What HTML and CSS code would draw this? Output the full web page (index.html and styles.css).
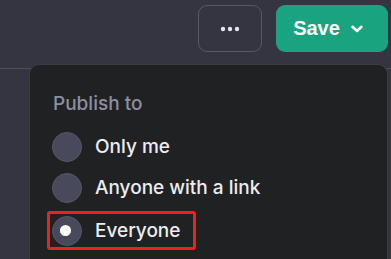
FILE: index.html
```html
<!DOCTYPE html>
<html>
<head>
<meta charset="utf-8">
<link rel="stylesheet" href="styles.css">
</head>
<body>
<div class="page">
  <header class="topbar">
    <button class="more-btn" aria-label="More">
      <svg width="20" height="6" viewBox="0 0 20 6"><circle cx="3" cy="3" r="2.2" fill="#e6e6ea"/><circle cx="10" cy="3" r="2.2" fill="#e6e6ea"/><circle cx="17" cy="3" r="2.2" fill="#e6e6ea"/></svg>
    </button>
    <button class="save-btn">
      <span>Save</span>
      <svg width="14" height="10" viewBox="0 0 14 10"><path d="M2.5 2.8 L7 7 L11.5 2.8" fill="none" stroke="#fff" stroke-width="2.6" stroke-linecap="round" stroke-linejoin="round"/></svg>
    </button>
  </header>
  <div class="menu">
    <div class="menu-title">Publish to</div>
    <div class="option"><span class="radio"></span><span class="label">Only me</span></div>
    <div class="option"><span class="radio"></span><span class="label">Anyone with a link</span></div>
    <div class="option selected"><span class="radio"><span class="dot"></span></span><span class="label">Everyone</span></div>
  </div>
</div>
</body>
</html>
```

FILE: styles.css
```css
* { box-sizing: border-box; }
html, body {
  margin: 0;
  padding: 0;
  width: 391px;
  height: 259px;
  overflow: hidden;
  background: #343541;
  font-family: Inter, "Noto Sans", sans-serif;
}
.page {
  position: relative;
  width: 391px;
  height: 259px;
  overflow: hidden;
}
.topbar {
  height: 69px;
  border-bottom: 1px solid #4d4e5a;
  display: flex;
  justify-content: flex-end;
  align-items: flex-start;
  gap: 14px;
  padding: 5px 3px 0 0;
}
.more-btn {
  width: 64px;
  height: 47px;
  border: 1px solid #585966;
  border-radius: 9px;
  background: transparent;
  display: flex;
  align-items: center;
  justify-content: center;
  padding: 0;
}
.save-btn {
  width: 112px;
  height: 47px;
  border: none;
  border-radius: 9px;
  background: #19a37f;
  color: #fff;
  display: flex;
  align-items: center;
  justify-content: center;
  gap: 10px;
  padding: 0 7px 0 0;
  font-family: "Liberation Sans", Arial, sans-serif;
  font-weight: 700;
  font-size: 20px;
}
.save-btn svg { margin-top: 1px; }
.menu {
  position: absolute;
  left: 29px;
  top: 64px;
  width: 359px;
  height: 195px;
  background: #202123;
  border: 1px solid #3a3b45;
  border-bottom: none;
  border-radius: 10px 10px 0 0;
  padding: 27px 0 0 22px;
}
.menu-title {
  color: #8e8ea0;
  font-size: 19px;
  font-weight: 500;
  line-height: 24px;
  margin-bottom: 10px;
  margin-left: 1px;
}
.option {
  display: flex;
  align-items: center;
  gap: 13px;
  height: 41px;
}
.option.selected {
  width: 149px;
  height: 39px;
  margin-left: -5px;
  padding-left: 5px;
  margin-top: 3px;
  outline: 3px solid #e5261d;
  outline-offset: -3px;
  border-radius: 3px;
}
.radio {
  width: 30px;
  height: 30px;
  border-radius: 50%;
  background: #484a5c;
  border: 1px solid #55576a;
  display: flex;
  align-items: center;
  justify-content: center;
  flex: none;
}
.dot {
  width: 11px;
  height: 11px;
  border-radius: 50%;
  background: #fff;
  margin-left: -4px;
}
.label {
  color: #ececf1;
  font-size: 19px;
  font-weight: 500;
  line-height: 24px;
}
```
